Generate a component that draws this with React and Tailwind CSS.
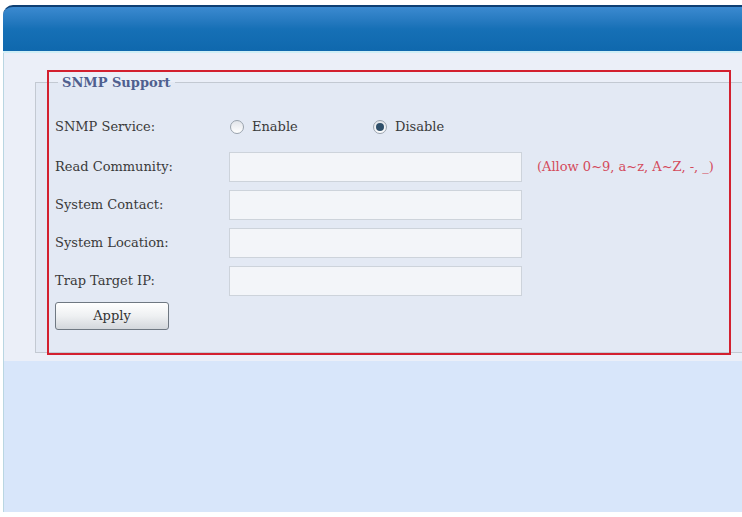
// SNMP Support settings page
import React from 'react';

const FIELDS = [
  { id: 'community', label: 'Read Community:', hint: '(Allow 0~9, a~z, A~Z, -, _)' },
  { id: 'contact', label: 'System Contact:' },
  { id: 'location', label: 'System Location:' },
  { id: 'trap', label: 'Trap Target IP:' },
];

function Radio({ checked, label }) {
  return (
    <label className="flex items-center gap-[8px]">
      <span className="w-[14px] h-[14px] rounded-full border border-[#9aa3ad] bg-gradient-to-b from-[#e2e5ea] to-[#ffffff] flex items-center justify-center">
        {checked && <span className="w-[8px] h-[8px] rounded-full bg-[#2f4f6a]" />}
      </span>
      <span>{label}</span>
    </label>
  );
}

export default function App() {
  return (
    <div
      className="w-[742px] h-[517px] bg-white overflow-hidden text-[13px] text-[#3a3a3a]"
      style={{ fontFamily: '"DejaVu Serif", "Liberation Serif", serif' }}
    >
      {/* Header bar */}
      <div className="mt-[5px] ml-[3px] h-[46px] rounded-tl-[10px] border-t-2 border-[#0e3f73] bg-gradient-to-b from-[#3b8ad0] via-[#1670b6] to-[#0f68ad]" />
      <div className="ml-[3px] h-[2px] bg-[#cfeef6]" />

      {/* Content panel */}
      <div className="ml-[3px] h-[459px] border-l border-[#b9d6e2] bg-[#d8e6fa] relative">
        <div className="bg-[#ebeff8] pt-[20px] pb-[8px]">
          <fieldset className="ml-[31px] w-[720px] border border-[#c3c9d2] bg-[#e3e9f4] pl-[19px] pr-0 pt-[19px] pb-[22px]">
            <legend className="ml-[3px] px-[4px] font-bold text-[13px] text-[#4f5f8f]">SNMP Support</legend>

            <div className="flex flex-col">
              <div className="flex items-center h-[30px]">
                <div className="w-[174px]">SNMP Service:</div>
                <div className="flex items-center">
                  <div className="w-[144px] pl-[1px]">
                    <Radio label="Enable" />
                  </div>
                  <Radio checked label="Disable" />
                </div>
              </div>

              <div className="flex flex-col gap-[8px] mt-[10px]">
                {FIELDS.map(f => (
                  <div key={f.id} className="flex items-center h-[30px]">
                    <div className="w-[174px]">{f.label}</div>
                    <input
                      type="text"
                      className="w-[293px] h-[30px] border border-[#cdd3db] bg-[#f3f5f9] outline-none"
                    />
                    {f.hint && (
                      <span className="ml-[15px] text-[#d4495b]">{f.hint}</span>
                    )}
                  </div>
                ))}
              </div>

              <div className="mt-[6px]">
                <button className="w-[114px] h-[28px] rounded-[3px] border border-[#6f7882] bg-gradient-to-b from-[#ffffff] via-[#eef0f2] to-[#d3d7dc] text-[13px] text-[#333]">
                  Apply
                </button>
              </div>
            </div>
          </fieldset>
        </div>

        {/* Red annotation frame */}
        <div className="absolute left-[43px] top-[17px] w-[684px] h-[285px] border-2 border-[#d3202f] pointer-events-none" />
      </div>
    </div>
  );
}
